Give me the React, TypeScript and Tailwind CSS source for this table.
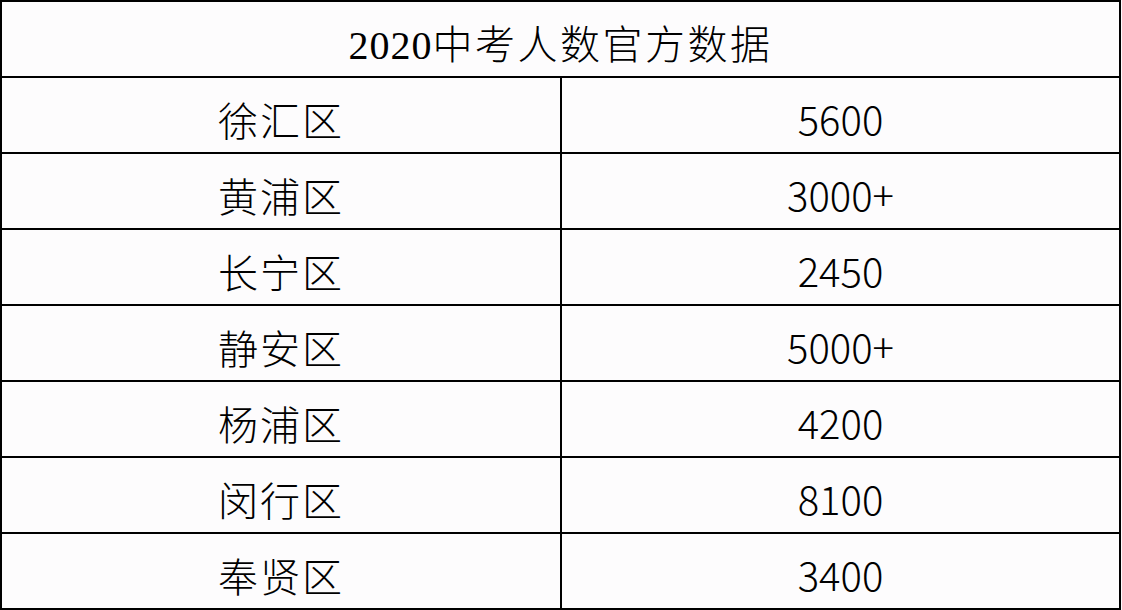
const rows: [string, string][] = [
  ['徐汇区', '5600'],
  ['黄浦区', '3000+'],
  ['长宁区', '2450'],
  ['静安区', '5000+'],
  ['杨浦区', '4200'],
  ['闵行区', '8100'],
  ['奉贤区', '3400'],
];

const cjk = "font-['Noto_Sans_CJK_SC',sans-serif]";

export default function App() {
  return (
    <div className="w-[1122px] h-[610px] bg-[#fdfcfd]">
      <div className="w-[1121px] border-l-2 border-t-2 border-black text-black">
        {/* Header */}
        <div className="h-[76px] border-r-2 border-b-2 border-black flex items-center justify-center pt-[10px]">
          <span className={`text-[40px] leading-none font-light tracking-[2.5px] ${cjk}`}>
            <span className="font-['Liberation_Serif',serif] tracking-[1px]">2020</span>中考人数官方数据
          </span>
        </div>

        {/* Rows */}
        {rows.map(([district, count]) => (
          <div key={district} className="grid grid-cols-[560px_559px] h-[76px]">
            <div className="border-r-2 border-b-2 border-black flex items-center justify-center pt-[8px]">
              <span className={`text-[40px] leading-none font-light tracking-[2px] ${cjk}`}>{district}</span>
            </div>
            <div className="border-r-2 border-b-2 border-black flex items-center justify-center pt-[6px]">
              <span className={`text-[40px] leading-none font-light ${cjk}`}>{count}</span>
            </div>
          </div>
        ))}
      </div>
    </div>
  );
}
